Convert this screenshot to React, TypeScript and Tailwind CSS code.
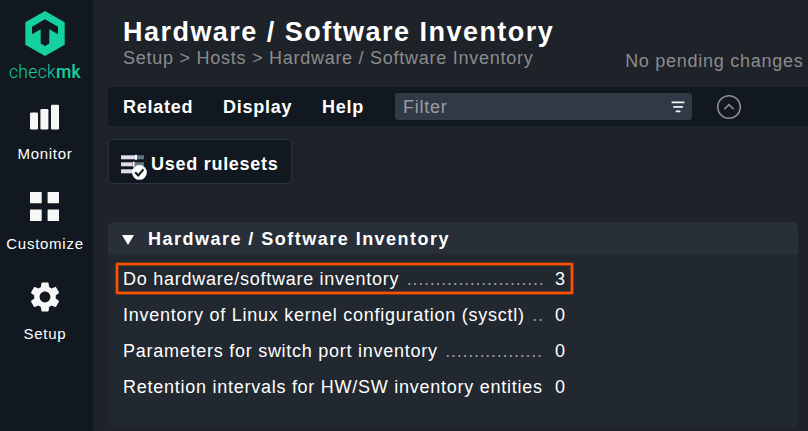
import React from "react";

const FONT = "font-['Liberation_Sans',Arial,sans-serif]";

function NavItem({ label, icon }: { label: string; icon: React.ReactNode }) {
  return (
    <a className="flex h-[90px] w-full flex-col items-center text-[15px] leading-[18px] text-white">
      <span className="mb-[13px] flex h-[30px] items-center">{icon}</span>
      <span className="pr-[3px] tracking-[0.73px]">{label}</span>
    </a>
  );
}

function Sidebar() {
  return (
    <nav className="flex w-[93px] shrink-0 flex-col items-center bg-[#12181f]">
      <svg className="mt-[11px] mr-[3px] block shrink-0" width="40" height="45" viewBox="0 0 40 45">
        <path d="M20 0 39.7 11.2V33.8L20 45 .3 33.8V11.2Z" fill="#15d1a0" />
        <path d="M20 8.2 33 15.7V23.3L24.3 18.2V32.4L20 35 15.7 32.4V18.2L7 23.3V15.7Z" fill="#12181f" />
      </svg>
      <div className="mr-[3px] mt-[5px] h-[22px] whitespace-nowrap font-['Roboto',sans-serif] text-[17.5px] leading-[22px] tracking-[0.35px] text-[#15d1a0]">
        <span className="font-light">check</span>
        <span className="font-medium">mk</span>
      </div>
      <div className="mt-[19px] flex w-full flex-col">
        <NavItem
          label="Monitor"
          icon={
            <svg className="mr-[3px]" width="30" height="30" viewBox="0 0 30 30" fill="#f7f7f7">
              <rect x="0" y="10.5" width="8" height="17" rx="1.3" />
              <rect x="10.4" y="7" width="8" height="20.5" rx="1.3" />
              <rect x="21" y="2.8" width="8" height="24.7" rx="1.3" />
            </svg>
          }
        />
        <NavItem
          label="Customize"
          icon={
            <svg className="mr-[3px]" width="30" height="30" viewBox="0 0 30 30" fill="#f7f7f7">
              <rect x="0" y="0" width="11.7" height="11.2" rx=".5" />
              <rect x="17.6" y="0" width="11.4" height="11.2" rx=".5" />
              <rect x="0" y="17.6" width="11.7" height="11.4" rx=".5" />
              <rect x="17.6" y="17.6" width="11.4" height="11.4" rx=".5" />
            </svg>
          }
        />
        <NavItem
          label="Setup"
          icon={
            <svg className="mr-[3px]" width="36" height="36" viewBox="0 0 24 24" fill="#f7f7f7">
              <path d="M19.14 12.94c.04-.3.06-.61.06-.94 0-.32-.02-.64-.07-.94l2.03-1.58c.18-.14.23-.41.12-.61l-1.92-3.32c-.12-.22-.37-.29-.59-.22l-2.39.96c-.5-.38-1.03-.7-1.62-.94l-.36-2.54c-.04-.24-.24-.41-.48-.41h-3.84c-.24 0-.43.17-.47.41l-.36 2.54c-.59.24-1.13.57-1.62.94l-2.39-.96c-.22-.08-.47 0-.59.22L2.74 8.87c-.12.21-.08.47.12.61l2.03 1.58c-.05.3-.09.63-.09.94s.02.64.07.94l-2.03 1.58c-.18.14-.23.41-.12.61l1.92 3.32c.12.22.37.29.59.22l2.39-.96c.5.38 1.03.7 1.62.94l.36 2.54c.05.24.24.41.48.41h3.84c.24 0 .44-.17.47-.41l.36-2.54c.59-.24 1.13-.56 1.62-.94l2.39.96c.22.08.47 0 .59-.22l1.92-3.32c.12-.22.07-.47-.12-.61l-2.01-1.58zM12 15.6c-1.98 0-3.6-1.62-3.6-3.6s1.62-3.6 3.6-3.6 3.6 1.62 3.6 3.6-1.62 3.6-3.6 3.6z" />
            </svg>
          }
        />
      </div>
    </nav>
  );
}

function Header() {
  return (
    <header className="flex h-[87px] justify-between pl-[30px] pr-1">
      <div className="pt-[16px]">
        <h1 className="whitespace-nowrap text-[27px] font-bold leading-[32px] tracking-[1.47px] text-white">
          Hardware / Software Inventory
        </h1>
        <div className="whitespace-nowrap text-[18px] leading-[21px] tracking-[0.74px] text-[#8c8c8e]">
          Setup &gt; Hosts &gt; Hardware / Software Inventory
        </div>
      </div>
      <div className="whitespace-nowrap pr-[0.6px] pt-[51px] text-[18px] leading-[21px] tracking-[0.73px] text-[#8c8c8e]">
        No pending changes
      </div>
    </header>
  );
}

function MenuBar() {
  return (
    <div className="ml-[15px] flex h-[39px] items-center rounded-l-[3px] bg-[#12181f] pl-[15px] text-[18px] font-bold tracking-[0.73px] text-white">
      <span className="w-[100px] pt-[2px]">Related</span>
      <span className="w-[99px] pt-[2px]">Display</span>
      <span className="w-[73px] pt-[2px]">Help</span>
      <div className="flex h-[27px] w-[297px] items-center justify-between rounded-[3px] bg-[#303946] pl-[8px] pr-[7px] font-normal text-[#9a9da2]">
        <span className="pt-[2px]">Filter</span>
        <svg width="14" height="12" viewBox="0 0 14 12" fill="#f4f4f4">
          <rect x="0.5" y="0.5" width="13" height="1.7" rx=".6" />
          <rect x="2.2" y="5" width="9.8" height="1.7" rx=".6" />
          <rect x="4.7" y="9.5" width="4.8" height="1.7" rx=".6" />
        </svg>
      </div>
      <svg className="ml-[24px]" width="26" height="26" viewBox="0 0 26 26" fill="none" stroke="#8f8f90" strokeWidth="1.5">
        <circle cx="13" cy="13" r="11.3" />
        <path d="m8.3 15.3 4.7-4.7 4.7 4.7" />
      </svg>
    </div>
  );
}

function UsedRulesets() {
  return (
    <button className="ml-[15px] mt-[13px] flex h-[45px] w-[184px] items-center rounded-[5px] border border-[#2b343f] bg-[#12181f] pl-[11px] pt-[5px] text-[18px] font-bold tracking-[0.73px] text-white">
      <svg className="mr-[3px] mt-[6px] block shrink-0" width="28" height="28" viewBox="0 0 28 28">
        <g fill="#dfd9f2">
          <rect x="1" y="2.3" width="14" height="4" />
          <rect x="1" y="9.3" width="11.5" height="4" />
          <rect x="1" y="16.3" width="12" height="4" />
        </g>
        <g fill="#647880">
          <rect x="17" y="2.3" width="7" height="4" />
          <rect x="15" y="9.3" width="9" height="4" />
        </g>
        <rect x="15" y="1.8" width="2" height="5" fill="#fff" />
        <rect x="12.7" y="8.8" width="2" height="5" fill="#fff" />
        <circle cx="19.4" cy="19.4" r="7.4" fill="#fff" />
        <path d="m15.2 19.2 3 3.2 5.3-6" fill="none" stroke="#12181f" strokeWidth="2.1" />
      </svg>
      Used rulesets
    </button>
  );
}

const rules = [
  { title: "Do hardware/software inventory", dots: "........................", count: 3, marked: true },
  { title: "Inventory of Linux kernel configuration (sysctl)", dots: "..", count: 0 },
  { title: "Parameters for switch port inventory", dots: ".................", count: 0 },
  { title: "Retention intervals for HW/SW inventory entities", dots: "", count: 0 },
];

function RuleRow({ title, dots, count, marked }: { title: string; dots: string; count: number; marked?: boolean }) {
  return (
    <li className="relative flex h-[36px] items-center pl-[15px] pt-[2px] text-[18px] tracking-[0.74px] text-white">
      <div className="flex w-[432px] whitespace-nowrap">
        <span>{title}</span>
        {dots && <span className="ml-[7.5px] text-[#9a9a9c] tracking-[0.73px]">{dots}</span>}
      </div>
      <span>{count}</span>
      {marked && (
        <span className="absolute left-[8px] top-[3px] h-[31px] w-[457px] rounded-[1px] border-2 border-[#ff4f00] shadow-[0_0_0_1px_rgba(255,79,0,0.35),inset_0_0_0_1px_rgba(255,79,0,0.4)]" />
      )}
    </li>
  );
}

function Panel() {
  return (
    <section className="ml-[15px] mt-[38px] h-[206px] w-[690px] overflow-hidden rounded-[6px] bg-[#22282f]">
      <h2 className="flex h-[32px] items-center bg-[#282f38] pl-[14px] pt-[2px] text-[18px] font-bold tracking-[1.48px] text-white">
        <svg className="mr-[14px] mt-[2px]" width="12" height="10" viewBox="0 0 12 10">
          <path d="M0 0h12L6 10Z" fill="#fff" />
        </svg>
        Hardware / Software Inventory
      </h2>
      <ul className="mt-[6px]">
        {rules.map((r) => (
          <RuleRow key={r.title} {...r} />
        ))}
      </ul>
    </section>
  );
}

export default function App() {
  return (
    <div className={`flex h-[431px] w-[808px] overflow-hidden bg-[#1e2229] ${FONT}`}>
      <Sidebar />
      <main className="flex min-w-0 flex-1 flex-col">
        <Header />
        <MenuBar />
        <UsedRulesets />
        <Panel />
      </main>
    </div>
  );
}
